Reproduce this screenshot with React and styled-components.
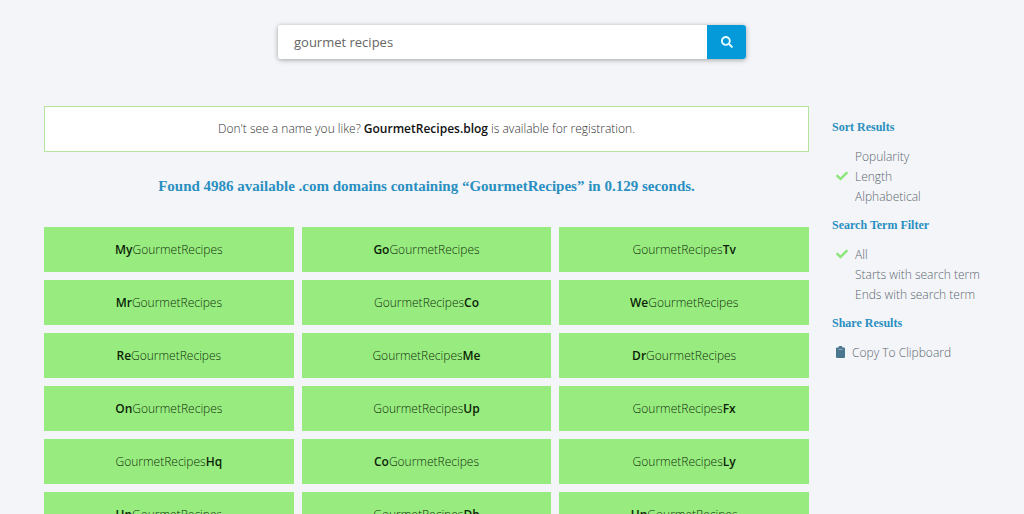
import React, { useState } from 'react'
import styled, { createGlobalStyle } from 'styled-components'
import { FaSearch, FaCheck } from 'react-icons/fa'

const GlobalStyle = createGlobalStyle`
* {
    box-sizing: border-box;
}
body {
    margin: 0;
    background: #f3f5f8;
    color: #333;
    font-family: "Open Sans", "Noto Sans", sans-serif;
    font-size: 12px;
    font-weight: 300;
}
b {
    font-weight: 600;
}
`;

const Page = styled('div')`
padding: 25px 24px 0 44px;
`;

const SearchRow = styled('div')`
margin: 0 0 47px -20px;
`;

const SearchForm = styled('form')`
display: flex;
width: 468px;
max-width: 100%;
height: 34px;
margin: 0 auto;
border-radius: 3px;
box-shadow: 0 1px 5px rgba(0, 0, 0, 0.35);
`;

const SearchInput = styled('input')`
flex: 1;
min-width: 0;
padding: 0 16px;
border: none;
border-radius: 3px 0 0 3px;
background: white;
color: #666;
font-family: inherit;
font-size: 13px;
outline: none;
`;

const SearchButton = styled('button')`
display: flex;
align-items: center;
justify-content: center;
width: 39px;
padding: 0;
border: none;
border-radius: 0 3px 3px 0;
background: #0499d9;
color: #e4fbff;
font-size: 12px;
cursor: pointer;
`;

const Columns = styled('div')`
display: flex;
align-items: flex-start;
gap: 23px;
`;

const Results = styled('main')`
flex: 1;
min-width: 0;
`;

const Notice = styled('p')`
margin: 0;
padding: 12px;
border: 1px solid #b5e3a0;
background: white;
line-height: 20px;
text-align: center;

b {
    color: #111;
}
`;

const Summary = styled('h1')`
margin: 24px 0 31px;
color: #2a8fc0;
font-family: "Liberation Serif", serif;
font-size: 15px;
font-weight: bold;
line-height: 20px;
text-align: center;
`;

const Grid = styled('div')`
display: grid;
grid-template-columns: repeat(3, 1fr);
gap: 8px;
`;

const Domain = styled('a')`
padding: 12px;
background: #98ec7f;
color: #12300c;
line-height: 21px;
text-align: center;
text-decoration: none;

b {
    color: #0b1f06;
}
`;

const Sidebar = styled('aside')`
width: 168px;
padding-top: 12px;
`;

const Group = styled('fieldset')`
margin: 0 0 10px;
padding: 0;
border: none;
`;

const GroupTitle = styled('legend')`
margin-bottom: 10px;
padding: 0;
color: #2a8fc0;
font-family: "Liberation Serif", serif;
font-size: 12px;
font-weight: bold;
line-height: 18px;
`;

const Option = styled('label')`
display: flex;
align-items: center;
height: 20px;
padding-left: 4px;
color: #5c6770;
cursor: pointer;
`;

const Radio = styled('input')`
appearance: none;
width: 0;
margin: 0;
`;

const Tick = styled('span')`
display: flex;
width: 19px;
color: #8de67b;
visibility: ${props => props.$on ? 'visible' : 'hidden'};
`;

const CopyButton = styled('button')`
display: flex;
align-items: center;
gap: 7px;
height: 20px;
padding: 0 0 0 4px;
border: none;
background: none;
color: #5c6770;
font: inherit;
cursor: pointer;
`;

const NAME = 'GourmetRecipes'

const domains = [
    { before: 'My' }, { before: 'Go' }, { after: 'Tv' },
    { before: 'Mr' }, { after: 'Co' }, { before: 'We' },
    { before: 'Re' }, { after: 'Me' }, { before: 'Dr' },
    { before: 'On' }, { after: 'Up' }, { after: 'Fx' },
    { after: 'Hq' }, { before: 'Co' }, { after: 'Ly' },
    { before: 'Up' }, { after: 'Db' }, { before: 'Un' },
]

const ClipboardIcon = () => (
    <svg width="9" height="12" viewBox="0 0 9 12" aria-hidden="true">
        <path fill="#4b7690" d="M1 1.5h1.7a1.8 1.8 0 0 1 3.6 0H8a1 1 0 0 1 1 1V11a1 1 0 0 1-1 1H1a1 1 0 0 1-1-1V2.5a1 1 0 0 1 1-1z" />
        <path fill="#a9c0cd" d="M2.5 3h4v.8h-4z" />
    </svg>
)

const OptionGroup = ({ title, name, options, value, onChange }) => (
    <Group>
        <GroupTitle>{title}</GroupTitle>
        {options.map(option => (
            <Option key={option}>
                <Radio type="radio" name={name} checked={value === option} onChange={() => onChange(option)} />
                <Tick $on={value === option}><FaCheck size={12} /></Tick>
                {option}
            </Option>
        ))}
    </Group>
)

const App = () => {
    const [term, setTerm] = useState('gourmet recipes')
    const [sort, setSort] = useState('Length')
    const [filter, setFilter] = useState('All')

    return (
        <Page>
            <GlobalStyle />
            <SearchRow>
                <SearchForm onSubmit={e => e.preventDefault()}>
                    <SearchInput aria-label="Search term" value={term} onChange={e => setTerm(e.target.value)} />
                    <SearchButton type="submit" aria-label="Search"><FaSearch /></SearchButton>
                </SearchForm>
            </SearchRow>
            <Columns>
                <Results>
                    <Notice>Don't see a name you like? <b>GourmetRecipes.blog</b> is available for registration.</Notice>
                    <Summary>Found 4986 available .com domains containing “GourmetRecipes” in 0.129 seconds.</Summary>
                    <Grid>
                        {domains.map(({ before, after }) => (
                            <Domain key={`${before}-${after}`} href="#">
                                {before && <b>{before}</b>}{NAME}{after && <b>{after}</b>}
                            </Domain>
                        ))}
                    </Grid>
                </Results>
                <Sidebar>
                    <OptionGroup
                        title="Sort Results"
                        name="sort"
                        options={['Popularity', 'Length', 'Alphabetical']}
                        value={sort}
                        onChange={setSort}
                    />
                    <OptionGroup
                        title="Search Term Filter"
                        name="filter"
                        options={['All', 'Starts with search term', 'Ends with search term']}
                        value={filter}
                        onChange={setFilter}
                    />
                    <Group>
                        <GroupTitle>Share Results</GroupTitle>
                        <CopyButton type="button"><ClipboardIcon />Copy To Clipboard</CopyButton>
                    </Group>
                </Sidebar>
            </Columns>
        </Page>
    )
}

export default App
